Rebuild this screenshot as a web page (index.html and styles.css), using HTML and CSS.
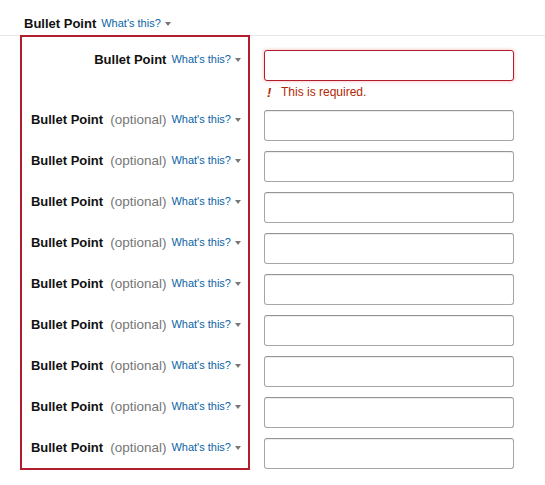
FILE: index.html
```html
<!DOCTYPE html>
<html lang="en">
<head>
<meta charset="utf-8">
<title>Bullet Point</title>
<link rel="stylesheet" href="styles.css">
</head>
<body>
<div class="header">
  <span class="name">Bullet Point</span>
  <a class="help">What's this?</a><span class="caret"></span>
</div>
<div class="section">
  <div class="labels">
    <div class="label first"><span class="name">Bullet Point</span><a class="help">What's this?</a><span class="caret"></span></div>
    <div class="label"><span class="name">Bullet Point</span><span class="opt">(optional)</span><a class="help">What's this?</a><span class="caret"></span></div>
    <div class="label"><span class="name">Bullet Point</span><span class="opt">(optional)</span><a class="help">What's this?</a><span class="caret"></span></div>
    <div class="label"><span class="name">Bullet Point</span><span class="opt">(optional)</span><a class="help">What's this?</a><span class="caret"></span></div>
    <div class="label"><span class="name">Bullet Point</span><span class="opt">(optional)</span><a class="help">What's this?</a><span class="caret"></span></div>
    <div class="label"><span class="name">Bullet Point</span><span class="opt">(optional)</span><a class="help">What's this?</a><span class="caret"></span></div>
    <div class="label"><span class="name">Bullet Point</span><span class="opt">(optional)</span><a class="help">What's this?</a><span class="caret"></span></div>
    <div class="label"><span class="name">Bullet Point</span><span class="opt">(optional)</span><a class="help">What's this?</a><span class="caret"></span></div>
    <div class="label"><span class="name">Bullet Point</span><span class="opt">(optional)</span><a class="help">What's this?</a><span class="caret"></span></div>
    <div class="label last"><span class="name">Bullet Point</span><span class="opt">(optional)</span><a class="help">What's this?</a><span class="caret"></span></div>
  </div>
  <div class="fields">
    <input class="field error" type="text">
    <div class="msg"><span class="bang">!</span><span>This is required.</span></div>
    <input class="field" type="text">
    <input class="field" type="text">
    <input class="field" type="text">
    <input class="field" type="text">
    <input class="field" type="text">
    <input class="field" type="text">
    <input class="field" type="text">
    <input class="field" type="text">
    <input class="field" type="text">
  </div>
</div>
</body>
</html>
```
FILE: styles.css
```css
html, body {
  margin: 0;
  padding: 0;
  background: #fff;
}
body {
  font-family: "Liberation Sans", Arial, sans-serif;
  color: #111;
  width: 545px;
  height: 485px;
  overflow: hidden;
}
.header {
  display: flex;
  align-items: center;
  padding: 14px 0 2px 24px;
  height: 19px;
  line-height: 19px;
}
.name {
  font-weight: bold;
  font-size: 13px;
  color: #111;
}
.help {
  font-size: 11px;
  color: #0a64a4;
  margin-left: 5px;
}
.opt {
  font-size: 13.5px;
  color: #767676;
  margin-left: 7px;
}
.caret {
  display: inline-block;
  width: 0;
  height: 0;
  border-left: 3.5px solid transparent;
  border-right: 3.5px solid transparent;
  border-top: 4px solid #777;
  margin-left: 4px;
}
.section {
  display: flex;
  align-items: flex-start;
  border-top: 1px solid #e7e7e7;
  padding-left: 20px;
}
.labels {
  width: 226px;
  margin-top: -1px;
  border: 2px solid #b01e2e;
  padding: 13px 0 11px 0;
}
.label {
  display: flex;
  align-items: center;
  justify-content: flex-end;
  height: 19px;
  line-height: 19px;
  padding-right: 7px;
  margin-bottom: 22px;
}
.label.first {
  margin-bottom: 41px;
}
.label.last {
  margin-bottom: 0;
}
.fields {
  display: flex;
  flex-direction: column;
  margin-left: 14px;
  padding-top: 14px;
}
.field {
  box-sizing: border-box;
  width: 250px;
  height: 31px;
  margin: 0 0 10px 0;
  border: 1px solid #a6a6a6;
  border-top-color: #949494;
  border-radius: 3px;
  box-shadow: 0 1px 0 rgba(255,255,255,.5), 0 1px 0 rgba(0,0,0,.07) inset;
  background: #fff;
  padding: 3px 7px;
}
.field.error {
  border-color: #b01e2e;
  box-shadow: 0 0 3px 1px rgba(221, 0, 0, 0.18);
  margin-bottom: 0;
}
.msg {
  display: flex;
  align-items: center;
  margin: 2px 0 8px 0;
  height: 19px;
  line-height: 19px;
  font-size: 12px;
  color: #b12704;
}
.bang {
  font-style: italic;
  font-weight: bold;
  width: 17px;
  padding-left: 3px;
  box-sizing: border-box;
  font-size: 13px;
}
```
